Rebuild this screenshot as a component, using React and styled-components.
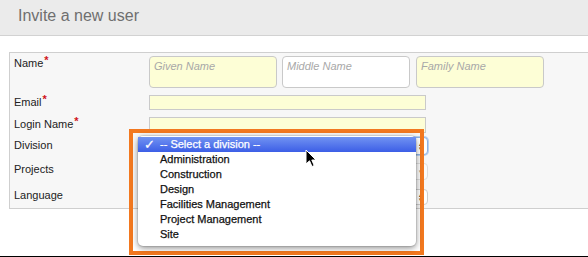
import styled, { createGlobalStyle } from "styled-components";

const GlobalStyle = createGlobalStyle`
  html, body {
    margin: 0;
    padding: 0;
    background: #ffffff;
  }
  body {
    width: 588px;
    height: 257px;
    overflow: hidden;
    font-family: "Liberation Sans", Arial, sans-serif;
  }
`

const divisions = [
  "Administration",
  "Construction",
  "Design",
  "Facilities Management",
  "Project Management",
  "Site",
]

function App() {
  return (
    <Page>
      <GlobalStyle />
      <Header>Invite a new user</Header>
      <Body>
        <Panel>
          <Row $mt={3} $h={32}>
            <Label>Name<Req>*</Req></Label>
            <NameFields>
              <NameInput $yellow>Given Name</NameInput>
              <NameInput>Middle Name</NameInput>
              <NameInput $yellow>Family Name</NameInput>
            </NameFields>
          </Row>
          <Row $mt={7} $h={15}>
            <Label>Email<Req>*</Req></Label>
            <TextInput />
          </Row>
          <Row $mt={7} $h={16}>
            <Label>Login Name<Req>*</Req></Label>
            <TextInput />
          </Row>
          <Row $mt={4} $h={18}>
            <Label $pt={2}>Division</Label>
            <SelectBox $focus>
              <Arrows>▴▾</Arrows>
            </SelectBox>
          </Row>
          <Row $mt={8} $h={17}>
            <Label $pt={0}>Projects</Label>
            <SelectBox $faded>
              <Arrows>▾</Arrows>
            </SelectBox>
          </Row>
          <Row $mt={9} $h={16}>
            <Label $pt={0}>Language</Label>
            <SelectBox>
              <Arrows>▴▾</Arrows>
            </SelectBox>
          </Row>
        </Panel>
      </Body>

      <Highlight />
      <Menu>
        <MenuItem $selected>
          <Check>✓</Check>-- Select a division --
        </MenuItem>
        {divisions.map((d) => (
          <MenuItem key={d}>{d}</MenuItem>
        ))}
      </Menu>
      <Cursor width="12" height="19" viewBox="0 0 12 19">
        <path
          d="M1 1 L1 15 L4.5 11.8 L7 17.5 L9.2 16.5 L6.8 11 L11 11 Z"
          fill="#000"
          stroke="#fff"
          strokeWidth="1"
          strokeLinejoin="round"
        />
      </Cursor>
    </Page>
  )
}

export default App

const Page = styled.div`
  position: relative;
  width: 588px;
  height: 257px;
  box-sizing: border-box;
  border-bottom: 1px solid #000;
  background: #fff;
`

const Header = styled.div`
  height: 32px;
  padding-bottom: 3px;
  border-bottom: 1px solid #d2d2d2;
  background: #ebebeb;
  padding-left: 18px;
  display: flex;
  align-items: center;
  font-size: 16px;
  color: #6f6f6f;
`

const Body = styled.div`
  padding: 16px 0 0 9px;
`

const Panel = styled.div`
  height: 157px;
  box-sizing: border-box;
  border: 1px solid #cfcfcf;
  border-right: none;
  background: #f7f7f7;
  padding-left: 4px;
  display: flex;
  flex-direction: column;
`

const Row = styled.div`
  display: flex;
  margin-top: ${(p) => p.$mt}px;
  height: ${(p) => p.$h}px;
`

const Label = styled.div`
  width: 135px;
  flex-shrink: 0;
  font-size: 11px;
  line-height: 13px;
  color: #222;
  padding-top: ${(p) => (p.$pt === undefined ? 1 : p.$pt)}px;
`

const Req = styled.span`
  color: #d0121b;
  font-weight: bold;
  font-size: 11px;
  position: relative;
  top: -3px;
  margin-left: 1px;
`

const NameFields = styled.div`
  display: flex;
  gap: 5px;
`

const NameInput = styled.div`
  width: 128px;
  height: 32px;
  box-sizing: border-box;
  border: 1px solid #c9c9c9;
  border-radius: 4px;
  background: ${(p) => (p.$yellow ? "#fdfed6" : "#ffffff")};
  color: #a8a8a8;
  font-style: italic;
  font-size: 11px;
  padding: 3px 0 0 4px;
  margin-right: ${(p) => (p.$yellow ? 0 : 1)}px;
`

const TextInput = styled.div`
  width: 277px;
  height: 100%;
  box-sizing: border-box;
  border: 1px solid #cacaca;
  background: #fdfed6;
`

const SelectBox = styled.div`
  width: 279px;
  height: 100%;
  box-sizing: border-box;
  border: 1px solid ${(p) => (p.$focus ? "#8db2e3" : "#cdcdcd")};
  border-radius: 4px;
  background: #fff;
  box-shadow: ${(p) => (p.$focus ? "0 0 0 1px #b8d0f0" : "none")};
  display: flex;
  justify-content: flex-end;
  align-items: center;
  opacity: ${(p) => (p.$faded ? 0.6 : 1)};
`

const Arrows = styled.span`
  font-size: 7px;
  line-height: 5px;
  width: 6px;
  margin-right: 3px;
  color: #333;
  word-break: break-all;
  text-align: center;
`

const Highlight = styled.div`
  position: absolute;
  left: 129px;
  top: 129px;
  width: 295px;
  height: 126px;
  box-sizing: border-box;
  border: 4px solid #f2781f;
`

const Menu = styled.div`
  position: absolute;
  left: 138px;
  top: 136px;
  width: 278px;
  height: 110px;
  box-sizing: border-box;
  padding-top: 1px;
  background: #fff;
  border-radius: 5px;
  box-shadow: 0 2px 6px rgba(0, 0, 0, 0.45), 0 0 0 1px rgba(0, 0, 0, 0.08);
`

const MenuItem = styled.div`
  position: relative;
  height: 15px;
  line-height: 15px;
  padding-left: 22px;
  font-size: 11px;
  -webkit-text-stroke: 0.25px currentColor;
  color: ${(p) => (p.$selected ? "#fff" : "#111")};
  background: ${(p) =>
    p.$selected ? "linear-gradient(#7193f2, #3c5ee6)" : "transparent"};
`

const Check = styled.span`
  position: absolute;
  left: 6px;
  top: 0;
  font-size: 13px;
  font-weight: bold;
  font-family: "DejaVu Sans", sans-serif;
`

const Cursor = styled.svg`
  position: absolute;
  left: 305px;
  top: 149px;
`
